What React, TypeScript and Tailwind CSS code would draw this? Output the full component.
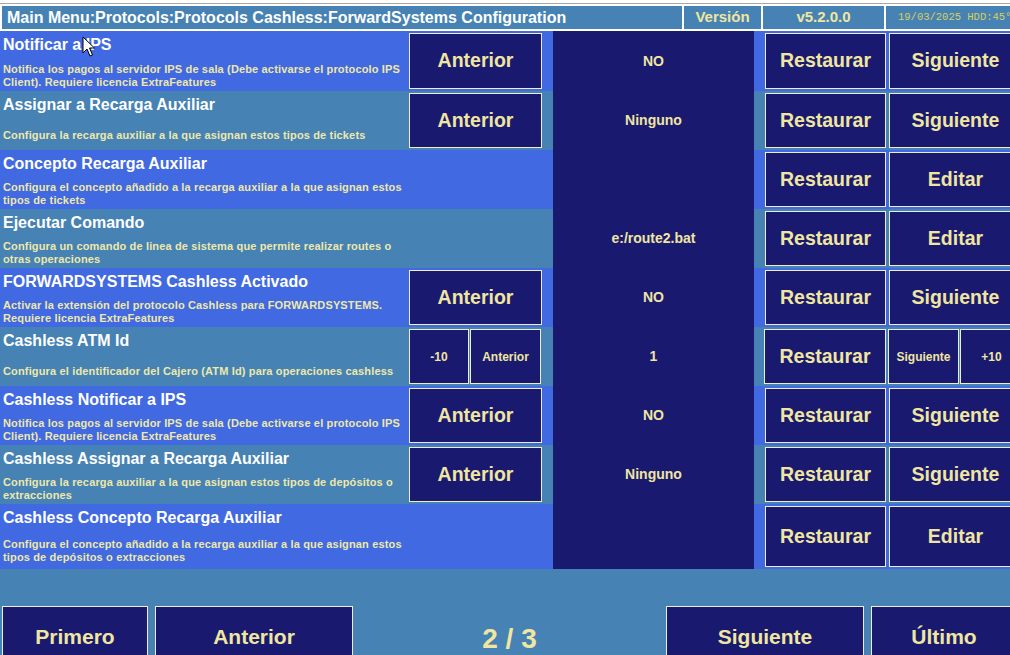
import React from "react"

interface SettingRow {
  title: string
  desc: string
  left?: string
  value: string
  right?: string
  numeric?: boolean
  height: string
}

const rows: SettingRow[] = [
  {
    title: "Notificar a IPS",
    desc: "Notifica los pagos al servidor IPS de sala (Debe activarse el protocolo IPS Client). Requiere licencia ExtraFeatures",
    left: "Anterior",
    value: "NO",
    right: "Siguiente",
    height: "h-[60px]",
  },
  {
    title: "Assignar a Recarga Auxiliar",
    desc: "Configura la recarga auxiliar a la que asignan estos tipos de tickets",
    left: "Anterior",
    value: "Ninguno",
    right: "Siguiente",
    height: "h-[59px]",
  },
  {
    title: "Concepto Recarga Auxiliar",
    desc: "Configura el concepto añadido a la recarga auxiliar a la que asignan estos tipos de tickets",
    value: "",
    right: "Editar",
    height: "h-[59px]",
  },
  {
    title: "Ejecutar Comando",
    desc: "Configura un comando de linea de sistema que permite realizar routes o otras operaciones",
    value: "e:/route2.bat",
    right: "Editar",
    height: "h-[59px]",
  },
  {
    title: "FORWARDSYSTEMS Cashless Activado",
    desc: "Activar la extensión del protocolo Cashless para FORWARDSYSTEMS. Requiere licencia ExtraFeatures",
    left: "Anterior",
    value: "NO",
    right: "Siguiente",
    height: "h-[59px]",
  },
  {
    title: "Cashless ATM Id",
    desc: "Configura el identificador del Cajero (ATM Id) para operaciones cashless",
    value: "1",
    numeric: true,
    height: "h-[59px]",
  },
  {
    title: "Cashless Notificar a IPS",
    desc: "Notifica los pagos al servidor IPS de sala (Debe activarse el protocolo IPS Client). Requiere licencia ExtraFeatures",
    left: "Anterior",
    value: "NO",
    right: "Siguiente",
    height: "h-[59px]",
  },
  {
    title: "Cashless Assignar a Recarga Auxiliar",
    desc: "Configura la recarga auxiliar a la que asignan estos tipos de depósitos o extracciones",
    left: "Anterior",
    value: "Ninguno",
    right: "Siguiente",
    height: "h-[59px]",
  },
  {
    title: "Cashless Concepto Recarga Auxiliar",
    desc: "Configura el concepto añadido a la recarga auxiliar a la que asignan estos tipos de depósitos o extracciones",
    value: "",
    right: "Editar",
    height: "h-[65px]",
  },
]

const btn =
  "flex items-center justify-center bg-[#191970] border border-[#eeeed0] text-[#f0e6a0] font-bold"

const Row: React.FC<{ row: SettingRow; index: number }> = ({ row, index }) => {
  const bg = index % 2 === 0 ? "bg-[#4169e1]" : "bg-[#4682b4]"
  return (
    <div className={`flex ${bg} ${row.height}`}>
      <div className="w-[407px] flex flex-col pl-[3px]">
        <div className="h-[29px] pt-[5px] text-[16px] leading-[18px] font-bold text-white whitespace-nowrap">
          {row.title}
        </div>
        <div className="flex-1 flex items-center">
          <p className="text-[11px] leading-[13px] font-bold tracking-[0.15px] text-[#eee8aa]">
            {row.desc}
          </p>
        </div>
      </div>

      <div className="w-[146px] flex gap-[1px] py-[2px] pl-[2px]">
        {row.numeric ? (
          <>
            <div className={`${btn} w-[60px] text-[12px]`}>-10</div>
            <div className={`${btn} w-[71px] text-[12px]`}>Anterior</div>
          </>
        ) : row.left ? (
          <div className={`${btn} w-[133px] text-[19.5px]`}>{row.left}</div>
        ) : null}
      </div>

      <div className="w-[201px] bg-[#191970] flex items-center justify-center text-[14px] font-bold text-[#f0e6a0]">
        {row.value}
      </div>

      {row.numeric ? (
        <div className="flex py-[2px] pl-[10px]">
          <div className={`${btn} w-[122px] text-[19.5px]`}>Restaurar</div>
          <div className={`${btn} w-[71px] ml-[2px] text-[12px]`}>Siguiente</div>
          <div className={`${btn} w-[63px] ml-[1px] text-[12px]`}>+10</div>
        </div>
      ) : (
        <div className="flex gap-[3px] py-[2px] pl-[11px]">
          <div className={`${btn} w-[121px] text-[19.5px]`}>Restaurar</div>
          <div className={`${btn} w-[133px] text-[19.5px]`}>{row.right}</div>
        </div>
      )}
    </div>
  )
}

const Cursor: React.FC = () => (
  <svg
    className="absolute left-[82px] top-[36px]"
    width="14"
    height="22"
    viewBox="0 0 14 22"
  >
    <path
      d="M1 1 L1 17 L5 13 L8 20 L10.5 19 L7.5 12 L12.5 12 Z"
      fill="#ffffff"
      stroke="#000000"
      strokeWidth="1"
      strokeLinejoin="miter"
    />
  </svg>
)

export default function App() {
  return (
    <div className="relative w-[1010px] h-[655px] overflow-hidden bg-[#4682b4] font-['Liberation_Sans',Arial,sans-serif]">
      <div className="w-[1024px]">
        <div className="h-[3px] bg-white" />
        <div className="h-[1px] bg-[#a8a8a8]" />
        <div className="flex gap-[2px] h-[27px] bg-white pt-[2px] pb-[2px] pl-[2px]">
          <div className="w-[680px] bg-[#4682b4] flex items-center pl-[5px] text-[16px] font-bold text-white whitespace-nowrap">
            Main Menu:Protocols:Protocols Cashless:ForwardSystems Configuration
          </div>
          <div className="w-[77px] bg-[#4682b4] flex items-center justify-center text-[15px] font-bold text-[#f0e6a0]">
            Versión
          </div>
          <div className="w-[121px] bg-[#4682b4] flex items-center justify-center text-[15px] font-bold text-[#f0e6a0]">
            v5.2.0.0
          </div>
          <div className="flex-1 bg-[#4682b4] flex items-center pl-[12px] font-['Liberation_Mono',monospace] text-[10.5px] text-[#d8d060] whitespace-nowrap">
            19/03/2025 HDD:45°
          </div>
        </div>

        {rows.map((row, i) => (
          <Row key={row.title} row={row} index={i} />
        ))}

        <div className="flex items-center mt-[37px] pl-[2px] h-[62px]">
          <div className={`${btn} w-[146px] h-full text-[21px]`}>Primero</div>
          <div className={`${btn} w-[198px] h-full ml-[7px] text-[21px]`}>Anterior</div>
          <div className="w-[313px] flex items-center justify-center text-[28px] font-bold text-[#f0e6a0] pt-[4px]">
            2 / 3
          </div>
          <div className={`${btn} w-[198px] h-full text-[21px]`}>Siguiente</div>
          <div className={`${btn} w-[146px] h-full ml-[7px] text-[21px]`}>Último</div>
        </div>
      </div>
      <Cursor />
    </div>
  )
}
